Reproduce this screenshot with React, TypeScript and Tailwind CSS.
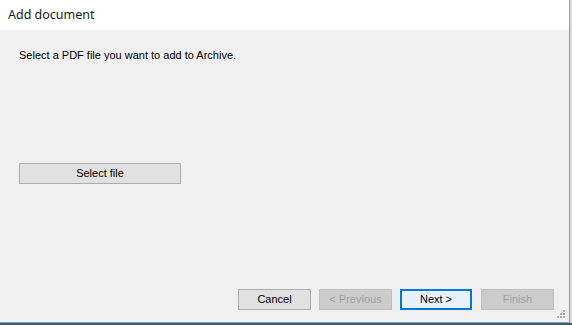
export default function App() {
  const btn =
    'h-[21px] border text-[11px] flex items-center justify-center leading-none';
  return (
    <div className="w-[572px] h-[325px] bg-[#4a5866] flex flex-col overflow-hidden" style={{ fontFamily: '"Liberation Sans", Arial, sans-serif' }}>
      <div className="flex h-[323px]">
        <div className="w-[569px] flex flex-col bg-[#f0f0f0] border-b border-[#6aa9d8]">
          <div className="h-[30px] bg-white flex items-center pl-[8px] text-[12.5px] text-[#1a1a1a]" style={{ fontFamily: '"Noto Sans", "Open Sans", sans-serif' }}>
            Add document
          </div>
          <div className="flex-1 flex flex-col relative">
            <p className="mt-[17px] ml-[19px] text-[11px] text-black">
              Select a PDF file you want to add to Archive.
            </p>
            <button className="mt-[99px] ml-[19px] w-[162px] h-[21px] border border-[#adadad] bg-[#e1e1e1] text-[11px] text-black">
              Select file
            </button>
            <div className="flex-1" />
            <div className="flex pl-[238px] gap-[8px] mb-[12px]">
              <div className={`${btn} w-[73px] border-[#adadad] bg-[#e1e1e1] text-black`}>Cancel</div>
              <div className={`${btn} w-[73px] border-[#bfbfbf] bg-[#cccccc] text-[#a0a0a0]`}>&lt; Previous</div>
              <div className={`${btn} w-[72px] border-2 border-[#0078d7] bg-[#e5f1fb] text-black`}>Next &gt;</div>
              <div className={`${btn} w-[73px] ml-[1px] border-[#bfbfbf] bg-[#cccccc] text-[#a0a0a0]`}>Finish</div>
            </div>
            <svg className="absolute right-[3px] bottom-[3px]" width="9" height="9" viewBox="0 0 9 9">
              <rect x="6" y="0" width="2" height="2" fill="#b0b0b0" />
              <rect x="3" y="3" width="2" height="2" fill="#b0b0b0" />
              <rect x="6" y="3" width="2" height="2" fill="#b0b0b0" />
              <rect x="0" y="6" width="2" height="2" fill="#b0b0b0" />
              <rect x="3" y="6" width="2" height="2" fill="#b0b0b0" />
              <rect x="6" y="6" width="2" height="2" fill="#b0b0b0" />
            </svg>
          </div>
        </div>
        <div className="w-[1px] bg-[#6aa9d8]" />
        <div className="flex-1 bg-[#d9d9d9]" />
      </div>
    </div>
  );
}
